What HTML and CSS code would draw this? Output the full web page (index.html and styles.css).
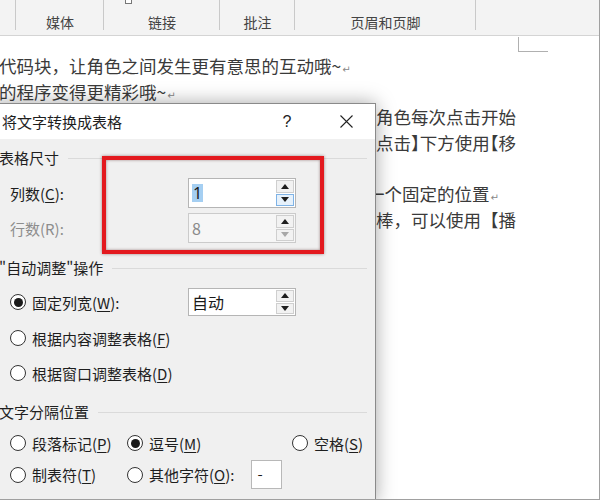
FILE: index.html
```html
<!DOCTYPE html>
<html lang="zh-CN">
<head>
<meta charset="utf-8">
<title>将文字转换成表格</title>
<link rel="stylesheet" href="styles.css">
</head>
<body>
<div class="screen">
  <div class="ribbon">
    <div class="grp g0"></div>
    <div class="grp g1"><span class="glabel">媒体</span></div>
    <div class="grp g2"><i class="mini"></i><span class="glabel">链接</span></div>
    <div class="grp g3"><span class="glabel">批注</span></div>
    <div class="grp g4"><span class="glabel">页眉和页脚</span></div>
    <div class="grp g5"></div>
  </div>

  <div class="doc">
    <i class="corner"></i>
    <p class="ln">代码块，让角色之间发生更有意思的互动哦~<span class="ret">↵</span></p>
    <p class="ln">的程序变得更精彩哦~<span class="ret">↵</span></p>
    <p class="ln r">让角色每次点击开始</p>
    <p class="ln r">点击<span class="p">】</span>下方使用<span class="p">【</span>移</p>
    <p class="ln"></p>
    <p class="ln r end">一个固定的位置<span class="ret">↵</span></p>
    <p class="ln r">更棒，可以使用【播</p>
  </div>

  <div class="dialog">
    <div class="titlebar">
      <span class="title">将文字转换成表格</span>
      <span class="help">?</span>
      <span class="close">
        <svg width="13" height="13" viewBox="0 0 13 13"><path d="M0.5 0.5 L12.5 12.5 M12.5 0.5 L0.5 12.5" stroke="#222" stroke-width="1.1" fill="none"/></svg>
      </span>
    </div>
    <div class="body">
      <div class="heading h1"><span>表格尺寸</span></div>
      <div class="row f1">
        <span class="lbl">列数(<u>C</u>):</span>
        <div class="spin">
          <span class="val"><span class="sel">1</span></span>
          <div class="btns"><span class="btn up"></span><span class="btn down hot"></span></div>
        </div>
      </div>
      <div class="row f2">
        <span class="lbl dis">行数(R):</span>
        <div class="spin disabled">
          <span class="val">8</span>
          <div class="btns"><span class="btn up"></span><span class="btn down off"></span></div>
        </div>
      </div>

      <div class="heading h2"><span>"自动调整"操作</span></div>
      <div class="row f3">
        <span class="lbl"><i class="radio on"></i>固定列宽(<u>W</u>):</span>
        <div class="spin short">
          <span class="val">自动</span>
          <div class="btns"><span class="btn up"></span><span class="btn down"></span></div>
        </div>
      </div>
      <div class="row f4"><span class="lbl"><i class="radio"></i>根据内容调整表格(<u>F</u>)</span></div>
      <div class="row f5"><span class="lbl"><i class="radio"></i>根据窗口调整表格(<u>D</u>)</span></div>

      <div class="heading h3"><span>文字分隔位置</span></div>
      <div class="seprow s1">
        <span class="opt"><i class="radio"></i>段落标记(<u>P</u>)</span>
        <span class="opt"><i class="radio on"></i>逗号(<u>M</u>)</span>
        <span class="opt"><i class="radio"></i>空格(<u>S</u>)</span>
      </div>
      <div class="seprow s2">
        <span class="opt"><i class="radio"></i>制表符(<u>T</u>)</span>
        <span class="opt"><i class="radio"></i>其他字符(<u>O</u>):<span class="charbox">-</span></span>
      </div>
    </div>
  </div>

  <div class="redmark"></div>
</div>
</body>
</html>
```

FILE: styles.css
```css
* { box-sizing: border-box; margin: 0; padding: 0; }
html, body { width: 600px; height: 500px; overflow: hidden; }
body { background: #fff; font-family: "Noto Sans CJK SC", "Noto Sans", sans-serif; }

.screen {
  position: relative;
  width: 600px;
  height: 500px;
  overflow: hidden;
  background: #fff;
  border-right: 1px solid #a0a0a0;
  border-bottom: 1px solid #a0a0a0;
}

/* ribbon */
.ribbon {
  display: flex;
  height: 36px;
  background: #f3f3f3;
  border-bottom: 1px solid #d4d4d4;
}
.grp {
  position: relative;
  height: 35px;
  display: flex;
  align-items: flex-end;
  justify-content: center;
  padding-bottom: 3px;
  background: linear-gradient(#c9c9c9, #c9c9c9) right top / 1px 30px no-repeat;
}
.g0 { width: 16px; }
.g1 { width: 88px; }
.g2 { width: 116px; }
.g3 { width: 75px; }
.g4 { width: 181px; }
.g5 { flex: 1; background: none; }
.glabel { font-size: 14px; line-height: 20px; color: #444; }
.mini {
  position: absolute;
  left: 21px;
  top: -4px;
  width: 7px;
  height: 8px;
  border: 1px solid #777;
  background: #fff;
}

/* document */
.doc {
  position: relative;
  padding-top: 17px;
  font-size: 17.5px;
  line-height: 25.6px;
  color: #3a3a3a;
}
.ln {
  width: 517px;
  height: 25.6px;
  white-space: nowrap;
  margin-left: -1px;
}
.ln.r { text-align: right; }
.ln.end { padding-right: 17px; }
.p { font-feature-settings: "halt"; }
.ret {
  font-family: "DejaVu Sans", sans-serif;
  font-size: 10px;
  color: #888;
  margin-left: 1px;
}
.corner {
  position: absolute;
  left: 518px;
  top: 1px;
  width: 30px;
  height: 15px;
  border-left: 1px solid #b0b0b0;
  border-bottom: 1px solid #b0b0b0;
}

/* dialog */
.dialog {
  position: absolute;
  left: -10px;
  top: 103px;
  width: 386px;
  height: 400px;
  background: #f0f0f0;
  border: 1px solid #8a8a8a;
  box-shadow: 0 0 18px rgba(0, 0, 0, 0.35);
  font-size: 15px;
  color: #1e1e1e;
}
.titlebar {
  height: 35px;
  background: #fff;
  display: flex;
  align-items: center;
  padding-left: 11px;
}
.title { flex: 1; font-size: 15px; color: #1e1e1e; }
.help {
  width: 60px;
  text-align: center;
  font-family: "Liberation Sans", sans-serif;
  font-size: 16px;
  color: #222;
}
.close {
  width: 58px;
  display: flex;
  justify-content: center;
  align-items: center;
}

.body { padding: 0 8px; }

.heading {
  display: flex;
  align-items: center;
  gap: 9px;
  height: 24px;
  line-height: 24px;
  color: #1e1e1e;
}
.heading::after {
  content: "";
  flex: 1;
  height: 1px;
  background: #dadada;
}
.h1 { margin-top: 7px; }
.h2 { margin-top: 13px; }
.h3 { margin-top: 13px; }

.row {
  display: flex;
  align-items: center;
  padding-left: 11px;
  height: 28px;
}
.f1 { margin-top: 8px; height: 30px; }
.f2 { margin-top: 5px; height: 30px; }
.f3 { margin-top: 8px; }
.f4 { margin-top: 8px; }
.f5 { margin-top: 7px; }

.lbl {
  width: 178px;
  display: flex;
  align-items: center;
  white-space: nowrap;
}
.lbl.dis { color: #8d8d8d; }
u { text-decoration: underline; text-underline-offset: 2px; }

.radio {
  width: 16px;
  height: 16px;
  margin-right: 6px;
  border: 1px solid #333;
  border-radius: 50%;
  background: #fff;
  display: inline-flex;
  align-items: center;
  justify-content: center;
  flex: none;
}
.radio.on::before {
  content: "";
  width: 9px;
  height: 9px;
  border-radius: 50%;
  background: #1a1a1a;
}

/* spin box */
.spin {
  width: 108px;
  height: 30px;
  border: 1px solid #b5b5b5;
  background: #fff;
  display: flex;
  padding: 1px 1px 1px 0;
}
.spin.short { height: 28px; }
.spin.disabled { background: #f6f6f6; border-color: #cbcbcb; }
.val {
  flex: 1;
  display: flex;
  align-items: center;
  padding-left: 3px;
  font-size: 16px;
  color: #1a1a1a;
}
.spin.disabled .val { color: #8a8a8a; }
.sel {
  background: #a5cff2;
  line-height: 18px;
  padding: 0 1px;
  font-family: "Noto Sans", sans-serif;
}
.btns {
  width: 18px;
  display: flex;
  flex-direction: column;
  gap: 1px;
}
.btn {
  flex: 1;
  border: 1px solid #cfcfcf;
  background: #f2f2f2;
  display: flex;
  align-items: center;
  justify-content: center;
}
.btn.hot { border-color: #7fb3e6; background: #e6f1fb; }
.btn.up::before {
  content: "";
  border-left: 4px solid transparent;
  border-right: 4px solid transparent;
  border-bottom: 5px solid #1e1e1e;
}
.btn.down::before {
  content: "";
  border-left: 4px solid transparent;
  border-right: 4px solid transparent;
  border-top: 5px solid #1e1e1e;
}
.btn.down.off::before { border-top-color: #a8a8a8; }

/* separator rows */
.seprow {
  display: grid;
  grid-template-columns: 117px 165px auto;
  align-items: center;
  padding-left: 11px;
  height: 28px;
}
.s1 { margin-top: 5px; }
.s2 { margin-top: 3px; height: 29px; }
.opt {
  display: flex;
  align-items: center;
  white-space: nowrap;
}
.charbox {
  width: 31px;
  height: 29px;
  margin-left: 17px;
  border: 1px solid #b8b8b8;
  background: #fff;
  padding-left: 5px;
  line-height: 26px;
  font-size: 15px;
}

/* red annotation box drawn over the dialog */
.redmark {
  position: absolute;
  left: 102px;
  top: 156px;
  width: 222px;
  height: 98px;
  border: 4px solid #e3191e;
  box-shadow: 0 0 3px rgba(60, 0, 0, 0.45), inset 0 0 3px rgba(60, 0, 0, 0.45);
}
```
